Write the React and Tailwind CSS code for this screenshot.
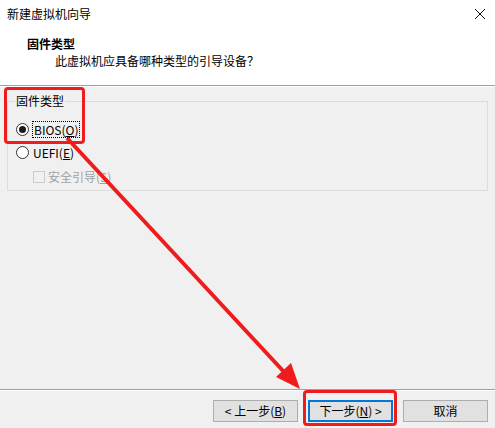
import React from "react";

const font = { fontFamily: '"Microsoft YaHei UI","Noto Sans CJK SC","Noto Sans",sans-serif' };

function Radio({ checked }) {
  return (
    <span className="relative inline-flex h-[13px] w-[13px] shrink-0 items-center justify-center rounded-full border border-[#333] bg-white">
      {checked && <span className="h-[7px] w-[7px] rounded-full bg-[#1a1a1a]" />}
    </span>
  );
}

function Button({ children, primary }) {
  return (
    <div
      className={
        "flex h-[22px] w-[85px] items-center justify-center text-[12px] text-black " +
        (primary ? "border-2 border-[#0078d7] bg-[#e1e1e1]" : "border border-[#adadad] bg-[#e1e1e1]")
      }
    >
      {children}
    </div>
  );
}

export default function App() {
  return (
    <div className="relative h-[428px] w-[495px] overflow-hidden bg-[#f0f0f0] text-black" style={font}>
      <div className="flex h-[428px] flex-col">
        {/* header */}
        <div className="h-[85px] bg-white">
          <div className="flex h-[27px] items-center justify-between pl-[7px] pr-[8px]">
            <span className="text-[12px] leading-none">新建虚拟机向导</span>
            <svg width="12" height="12" viewBox="0 0 12 12" className="mr-[1px]">
              <path d="M1 1 L11 11 M11 1 L1 11" stroke="#111" strokeWidth="1" />
            </svg>
          </div>
          <div className="pl-[27px] pt-[9px] text-[12px] font-bold leading-[16px]">固件类型</div>
          <div className="pl-[55px] pt-[1px] text-[12px] leading-[16px]">此虚拟机应具备哪种类型的引导设备？</div>
        </div>
        <div className="h-px bg-[#a0a0a0]" />
        <div className="h-px bg-white" />
        {/* body */}
        <div className="flex-1 px-[7px] pt-[14px]">
          <div className="relative h-[90px] w-[481px] border border-[#dcdcdc]">
            <span className="absolute left-[7px] top-[-9px] bg-[#f0f0f0] px-px text-[12px] leading-[16px]">固件类型</span>
            <div className="flex flex-col pl-[8px] pt-[19px]">
              <div className="flex h-[17px] items-center gap-[3px]">
                <Radio checked />
                <span className="border border-dotted border-black px-px text-[12px] leading-[15px]">
                  BIOS(<span className="underline">O</span>)
                </span>
              </div>
              <div className="mt-[6px] flex h-[17px] items-center gap-[4px]">
                <Radio />
                <span className="text-[12px] leading-[15px]">
                  UEFI(<span className="underline">E</span>)
                </span>
              </div>
              <div className="mt-[7px] flex h-[17px] items-center gap-[3px] pl-[17px]">
                <span className="h-[12px] w-[12px] border border-[#cccccc] bg-[#f0f0f0]" />
                <span className="text-[12px] leading-[15px] text-[#a0a0a0]">
                  安全引导(<span className="underline">S</span>)
                </span>
              </div>
            </div>
          </div>
        </div>
        {/* footer */}
        <div className="h-px bg-[#a0a0a0]" />
        <div className="h-px bg-white" />
        <div className="flex h-[37px] items-start justify-end gap-[10px] pr-[7px] pt-[9px]">
          <Button>
            &lt; 上一步(<span className="underline">B</span>)
          </Button>
          <Button primary>
            下一步(<span className="underline">N</span>) &gt;
          </Button>
          <Button>取消</Button>
        </div>
      </div>

      {/* annotations */}
      <div className="absolute left-[4px] top-[87px] h-[57px] w-[81px] rounded-[4px] border-[3px] border-[#ee1c1c]" />
      <div className="absolute left-[303px] top-[390px] h-[36px] w-[94px] rounded-[4px] border-[3px] border-[#ee1c1c]" />
      <svg className="pointer-events-none absolute left-0 top-0" width="495" height="428" viewBox="0 0 495 428">
        <line x1="67" y1="138" x2="285" y2="373" stroke="#ee1c1c" strokeWidth="4" />
        <polygon points="300,389 276,377 291,363" fill="#ee1c1c" />
      </svg>
    </div>
  );
}
